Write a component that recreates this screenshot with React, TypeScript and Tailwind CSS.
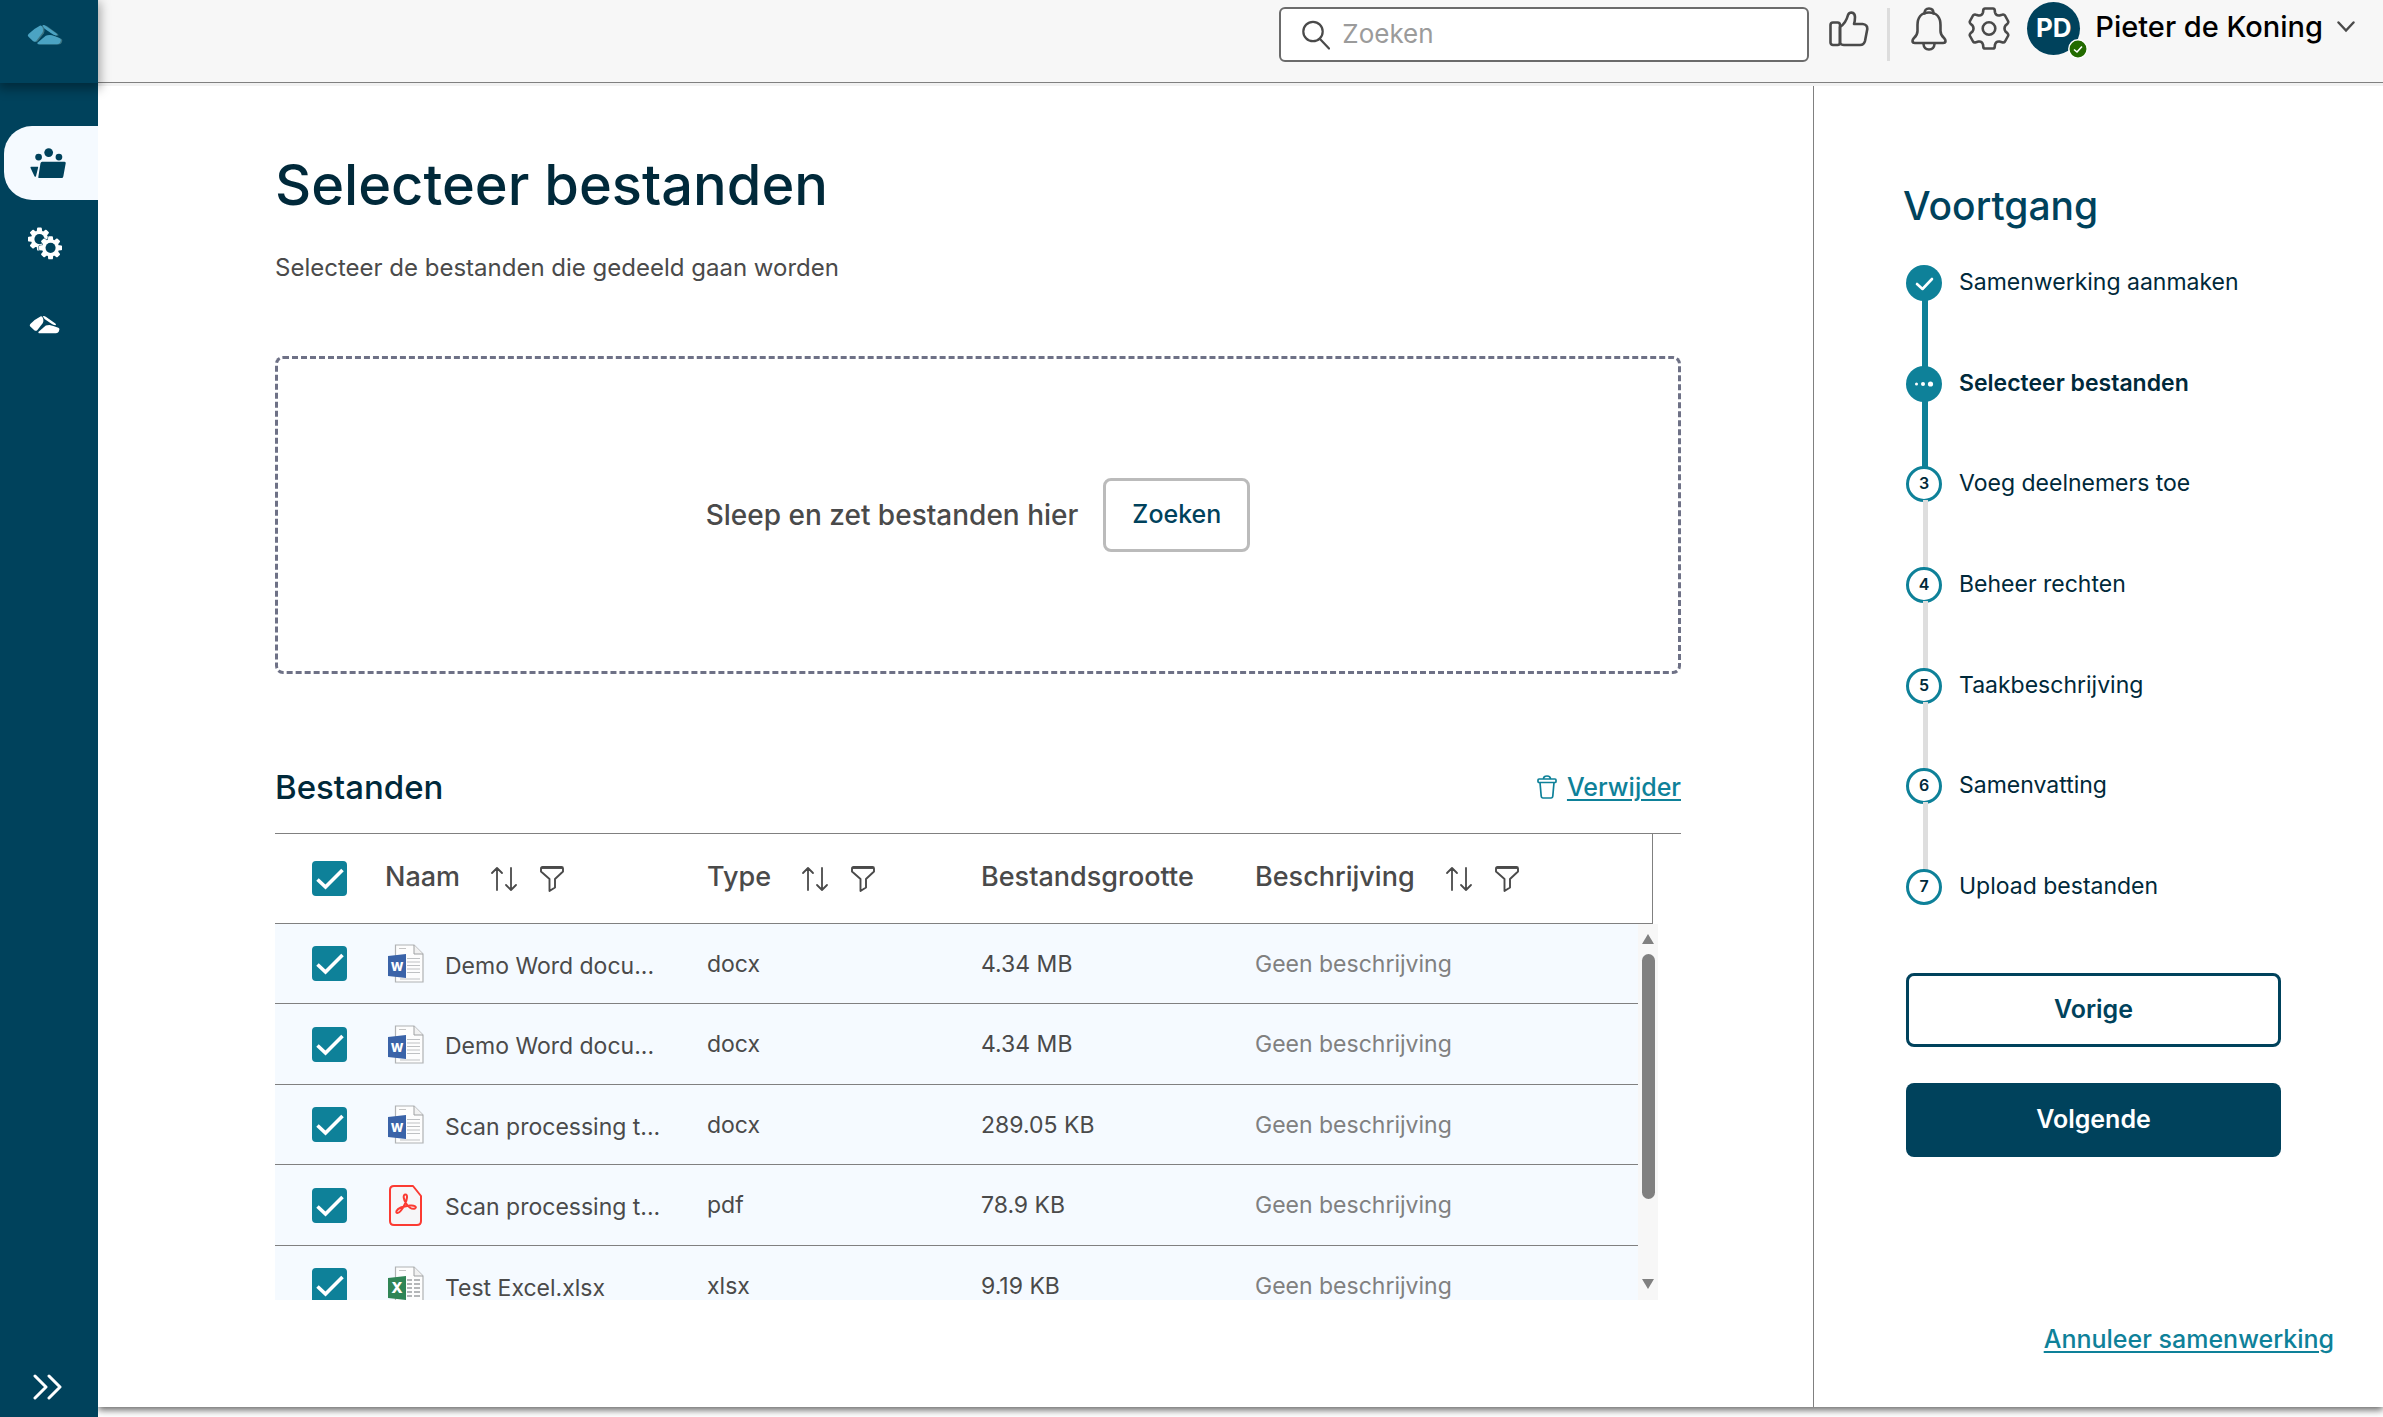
import React from "react";

const TEAL = "#0e8199";

/* ---------- icons ---------- */

function Stones({ className }: { className?: string }) {
  return (
    <g className={className}>
      <path d="M36 4Q40 3 43 11Q45 19 42 24L25 46Q21 50 16 46L4 35Q0 31 4 27Q18 13 36 4Z" />
      <path d="M42 3Q47 2 52 6L80 26Q84 30 80 31Q74 31 67 26L48 13Q44 9 42 3Z" />
      <path d="M51 32Q55 30 62 30Q72 31 89 39Q93 41 92 45L90 51Q88 55 82 55L30 55Q26 54 30 50Z" />
    </g>
  );
}

function LogoIcon() {
  return (
    <svg viewBox="0 0 98 60" className="w-9" aria-hidden="true">
      <g transform="translate(4 1)"><Stones className="fill-[#3b7482]" /></g>
      <Stones className="fill-[#4ba3c3]" />
    </svg>
  );
}

function StonesIcon() {
  return (
    <svg viewBox="0 0 94 58" className="w-[31px]" aria-hidden="true">
      <Stones className="fill-white" />
    </svg>
  );
}

function TeamFolderIcon() {
  return (
    <svg viewBox="0 0 107 92" className="w-9 fill-[#00425c]" aria-hidden="true">
      <circle cx="55.500" cy="13.500" r="13" />
      <circle cx="25.500" cy="27" r="10" />
      <circle cx="86" cy="27" r="10" />
      <path d="M3 56H23Q25 56 24 59L18 83Q16 88 13 83L2 60Q0 56 3 56Z" />
      <path d="M36 41H102Q107 41 106 46L99 85Q97 91 91 91H29Q24 91 25 85L31 46Q32 41 36 41Z" />
    </svg>
  );
}

function gearPath(cx: number, cy: number, outer: number, inner: number) {
  const teeth = 8;
  const points: string[] = [];
  for (let i = 0; i < teeth; i++) {
    const base = (i / teeth) * Math.PI * 2 - Math.PI / 2;
    const spots: [number, number][] = [[-0.25, inner], [-0.14, outer], [0.14, outer], [0.25, inner]];
    spots.forEach(([offset, radius]) =>
      points.push(`${(cx + Math.cos(base + offset) * radius).toFixed(2)} ${(cy + Math.sin(base + offset) * radius).toFixed(2)}`),
    );
  }
  return `M${points.join("L")}Z`;
}

function GearsIcon() {
  const back = gearPath(34, 36, 32, 23);
  const front = gearPath(67, 62, 32, 23);
  return (
    <svg viewBox="0 0 101 100" className="w-[34px]" strokeLinejoin="round" aria-hidden="true">
      <path d={back} className="fill-white stroke-white" strokeWidth="5" />
      <circle cx="34" cy="36" r="15" className="fill-[#00425c]" />
      <path d={front} className="fill-[#00425c] stroke-[#00425c]" strokeWidth="8" />
      <path d={front} className="fill-white stroke-white" strokeWidth="5" />
      <circle cx="67" cy="62" r="15" className="fill-[#00425c]" />
    </svg>
  );
}

function ExpandIcon() {
  return (
    <svg viewBox="0 0 30 28" className="w-[30px] fill-none stroke-white" strokeWidth="3" strokeLinecap="round" strokeLinejoin="round" aria-hidden="true">
      <path d="M3 3L14 14L3 25M17 3L28 14L17 25" />
    </svg>
  );
}

function SearchIcon() {
  return (
    <svg viewBox="0 0 28 30" className="w-7 fill-none stroke-[#4a4a4a]" strokeWidth="2.200" strokeLinecap="round" aria-hidden="true">
      <circle cx="11" cy="11.500" r="9.700" />
      <path d="M18 19L27 28.500" />
    </svg>
  );
}

const outline = "fill-none stroke-[#4a4a4a]";

function ThumbIcon() {
  return (
    <svg viewBox="0 0 40 36" className={`w-10 ${outline}`} strokeWidth="2.600" strokeLinejoin="round" aria-hidden="true">
      <rect x="1.500" y="11.500" width="9.500" height="22.500" rx="2.500" />
      <path d="M11 16Q17 12 19 4Q20 1.500 22.500 1.500Q26 2 26 6Q26 10 25 13H33.500Q38.500 13.500 38.300 18L36 30Q35 34 31 34H15Q12 34 11 32Z" />
    </svg>
  );
}

function BellIcon() {
  return (
    <svg viewBox="0 0 36 44" className={`w-9 ${outline}`} strokeWidth="2.600" strokeLinejoin="round" strokeLinecap="round" aria-hidden="true">
      <path d="M13.500 6.500Q13.500 1.500 18 1.500T22.500 6.500" />
      <path d="M18 5.500C10 5.500 6.500 11 6.500 18V24Q6.500 28 3 31Q1.500 32.500 1.500 34Q1.500 36 4 36H32Q34.500 36 34.500 34Q34.500 32.500 33 31Q29.500 28 29.500 24V18C29.500 11 26 5.500 18 5.500Z" />
      <path d="M12.500 37Q13 42.500 18 42.500T23.500 37" />
    </svg>
  );
}

function SettingsIcon() {
  return (
    <svg viewBox="0 0 42 43" className={`w-[42px] ${outline}`} strokeWidth="2.600" strokeLinejoin="round" aria-hidden="true">
      <path d="M17 1.500H25Q26.500 1.500 26.700 3L27 5.500Q28 9 31.500 8.500L34 7.700Q36 7 37 8.500L40 14Q40.700 15.500 39.500 16.700L37.500 18.500Q35.500 21.500 37.500 24.500L39.500 26.300Q40.700 27.500 40 29L37 34.500Q36 36 34 35.300L31.500 34.500Q28 34 27 37.500L26.700 40Q26.500 41.500 25 41.500H17Q15.500 41.500 15.300 40L15 37.500Q14 34 10.500 34.500L8 35.300Q6 36 5 34.500L2 29Q1.300 27.500 2.500 26.300L4.500 24.500Q6.500 21.500 4.500 18.500L2.500 16.700Q1.300 15.500 2 14L5 8.500Q6 7 8 7.700L10.500 8.500Q14 9 15 5.500L15.300 3Q15.500 1.500 17 1.500Z" />
      <circle cx="21" cy="21.500" r="6.300" />
    </svg>
  );
}

function TrashIcon() {
  return (
    <svg viewBox="0 0 20 24" className="w-5 fill-none stroke-[#0e8199]" strokeWidth="1.700" strokeLinejoin="round" aria-hidden="true">
      <path d="M6.500 4Q6.500 1 10 1T13.500 4" />
      <rect x="1" y="4" width="18" height="3.500" rx="1" />
      <path d="M3 7.500L4.200 21Q4.400 23 6 23H14Q15.600 23 15.800 21L17 7.500" />
    </svg>
  );
}

function SortIcon() {
  return (
    <svg viewBox="0 0 28 26" className={`w-7 ${outline}`} strokeWidth="1.800" strokeLinecap="round" strokeLinejoin="round" aria-hidden="true">
      <path d="M7 24V2M2 7L7 2L12 7M21 2V24M16 19L21 24L26 19" />
    </svg>
  );
}

function FilterIcon() {
  return (
    <svg viewBox="0 0 24 26" className={`w-6 ${outline}`} strokeWidth="1.900" strokeLinejoin="round" aria-hidden="true">
      <path d="M2.500 1H21.500Q23 1 23 2.500V5.500L15 13V21.500L9.500 25V13L1 5.500V2.500Q1 1 2.500 1Z" />
      <path d="M1.500 2H22.500" />
    </svg>
  );
}

function OfficeIcon({ letter }: { letter: "W" | "X" }) {
  const excel = letter === "X";
  return (
    <svg viewBox="0 0 36 39" className="h-[39px] w-9" aria-hidden="true">
      <path d="M7.500 1H26L35 10V38H7.500Z" fill="#fdfdfd" stroke="#b0b2b4" strokeWidth="1.200" />
      <path d="M26 1V10H35" fill="#f1f1f1" stroke="#9fa1a3" />
      <path d="M11 4.500H18" stroke="#c4c4c4" />
      {excel ? (
        <path d="M19 14H24M26 14H32M19 18H24M26 18H32M19 22H24M26 22H32M19 26H24M26 26H32M19 30H24M26 30H32" stroke="#b4b6b8" strokeWidth="1.800" />
      ) : (
        <path d="M19 14.500H32M19 18H32M19 21.500H32M19 25H32M19 28.500H32M12 35H32" stroke="#bfc1c3" />
      )}
      <path d="M0 12L18 10V34L0 32Z" fill={excel ? "#2f8556" : "#3a63a8"} />
      <text x="9" y="27" textAnchor="middle" fill="#fff" fontFamily="Inter, sans-serif" fontWeight="800" fontSize={excel ? 15 : 12}>
        {letter}
      </text>
    </svg>
  );
}

function PdfIcon() {
  return (
    <svg viewBox="0 0 36 41" className="h-[41px] w-9" fill="none" stroke="#fb3b33" strokeLinejoin="round" aria-hidden="true">
      <path d="M6 1H25L33 11V36Q33 40 29 40H6Q2 40 2 36V5Q2 1 6 1Z" fill="#f6f6f8" strokeWidth="2" />
      <path
        d="M17.500 9.500C14.500 9.500 15.500 15 18.500 19C21 22.500 24.500 24.500 27 23.500C29.500 22 26.500 20 22 20.500C17 21 10 23 8.500 26C7.500 28.500 10.500 29 13 25.500C16 21.500 18.500 16 19 12.500C19.200 10.500 18.500 9.500 17.500 9.500Z"
        strokeWidth="2"
      />
    </svg>
  );
}

/* ---------- shared pieces ---------- */

function Checkbox({ label }: { label: string }) {
  return (
    <label className="relative block size-[35px]">
      <input type="checkbox" defaultChecked aria-label={label} className="peer block size-full appearance-none rounded border-2 border-[#0e8199] bg-white checked:bg-[#0e8199]" />
      <svg viewBox="0 0 35 35" className="pointer-events-none absolute inset-0 hidden fill-none stroke-white peer-checked:block" strokeWidth="3.600" aria-hidden="true">
        <path d="M5.500 18.500L13.500 26L30.500 9" />
      </svg>
    </label>
  );
}

const rowGrid = "grid grid-cols-[110px_322fr_274fr_274fr_383fr] items-center";

const files: { name: string; type: string; size: string }[] = [
  { name: "Demo Word docu...", type: "docx", size: "4.34 MB" },
  { name: "Demo Word docu...", type: "docx", size: "4.34 MB" },
  { name: "Scan processing t...", type: "docx", size: "289.05 KB" },
  { name: "Scan processing t...", type: "pdf", size: "78.9 KB" },
  { name: "Test Excel.xlsx", type: "xlsx", size: "9.19 KB" },
];

const steps = [
  "Samenwerking aanmaken",
  "Selecteer bestanden",
  "Voeg deelnemers toe",
  "Beheer rechten",
  "Taakbeschrijving",
  "Samenvatting",
  "Upload bestanden",
];

function FileIcon({ type }: { type: string }) {
  if (type === "pdf") return <PdfIcon />;
  return <OfficeIcon letter={type === "xlsx" ? "X" : "W"} />;
}

function HeaderCell({ title, tools }: { title: string; tools?: boolean }) {
  return (
    <th scope="col" className="flex items-center text-left text-[27px] font-medium">
      <span className="pb-0.5">{title}</span>
      {tools && (
        <span className="ml-[30px] flex items-center gap-[22px]">
          <button type="button" aria-label={`Sorteer op ${title}`}><SortIcon /></button>
          <button type="button" aria-label={`Filter op ${title}`}><FilterIcon /></button>
        </span>
      )}
    </th>
  );
}

function Sidebar() {
  return (
    <nav className="z-20 flex w-[98px] shrink-0 flex-col bg-[#00425c]" aria-label="Hoofdmenu">
      <a href="#start" aria-label="Start" className="flex h-[83px] items-center pb-3 pl-[27px] shadow-[0_4px_10px_2px_rgba(0,0,0,0.35)]">
        <LogoIcon />
      </a>
      <div className="mt-[43px] flex flex-col gap-[7px]">
        <a href="#samenwerkingen" aria-label="Samenwerkingen" className="ml-1 flex h-[74px] items-center rounded-l-[28px] bg-[#f5faff] pl-[26px]">
          <TeamFolderIcon />
        </a>
        <a href="#beheer" aria-label="Beheer" className="flex h-[74px] items-center pl-7"><GearsIcon /></a>
        <a href="#over" aria-label="Over" className="flex h-[74px] items-center pl-[29px]"><StonesIcon /></a>
      </div>
      <button type="button" aria-label="Menu uitklappen" className="mt-auto flex items-center pb-4 pl-8">
        <ExpandIcon />
      </button>
    </nav>
  );
}

function TopBar() {
  return (
    <header className="z-10 flex h-[83px] shrink-0 items-start justify-end border-b border-[#808080] bg-[#f7f7f7] pr-[28px]">
      <div className="mt-[7px] flex h-[55px] w-[530px] items-center gap-3 rounded-md border-2 border-[#6b6b6b] bg-white pl-[21px]">
        <SearchIcon />
        <input type="search" aria-label="Zoeken" placeholder="Zoeken" className="min-w-0 flex-1 bg-transparent pb-0.5 text-[26px] outline-none placeholder:text-[#9b9b9b]" />
      </div>
      <button type="button" aria-label="Feedback" className="mt-[11px] ml-5"><ThumbIcon /></button>
      <div className="mt-2 ml-[18px] h-[53px] w-[3px] bg-[#dddddd]" />
      <button type="button" aria-label="Meldingen" className="mt-[7px] ml-[21px]"><BellIcon /></button>
      <button type="button" aria-label="Instellingen" className="mt-[7px] ml-[21px]"><SettingsIcon /></button>
      <button type="button" className="ml-[17px] flex h-[53px] items-center">
        <span className="relative mt-1 flex size-[53px] items-center justify-center rounded-full bg-[#00425c] pb-0.5 text-[26px] font-bold text-white">
          PD
          <svg viewBox="0 0 20 20" className="absolute -right-2 -bottom-1 size-5" aria-hidden="true">
            <circle cx="10" cy="10" r="9.200" fill="#236b00" stroke="#fff" strokeWidth="1.500" />
            <path d="M6 10.500L9 13L14 7.500" fill="none" stroke="#fff" strokeWidth="1.600" />
          </svg>
        </span>
        <span className="ml-[15px] text-[29px] font-medium text-black">Pieter de Koning</span>
        <svg viewBox="0 0 18 12" className="ml-[14px] w-[18px] fill-none stroke-[#4a4a4a]" strokeWidth="2.400" strokeLinecap="round" aria-hidden="true">
          <path d="M1.500 1.500L9 9.500L16.500 1.500" />
        </svg>
      </button>
    </header>
  );
}

function FilesTable() {
  return (
    <section className="mt-[88px]" aria-labelledby="bestanden">
      <div className="flex items-center justify-between">
        <h2 id="bestanden" className="text-[33px] leading-[50px] font-medium text-[#00293a]">Bestanden</h2>
        <a href="#verwijder" className="flex items-center gap-[10px] text-[25px] font-medium text-[#0e8199]">
          <TrashIcon />
          <span className="pt-0.5 underline decoration-2 underline-offset-3">Verwijder</span>
        </a>
      </div>
      <div className="mt-[21px] border-t border-[#808080] pr-7">
        <table className="block border-r border-b border-[#808080]">
          <thead className="block">
            <tr className={`${rowGrid} h-[89px] pr-[14px]`}>
              <th scope="col" className="pl-[37px]"><Checkbox label="Alles selecteren" /></th>
              <HeaderCell title="Naam" tools />
              <HeaderCell title="Type" tools />
              <HeaderCell title="Bestandsgrootte" />
              <HeaderCell title="Beschrijving" tools />
            </tr>
          </thead>
        </table>
      </div>
      <div className="mr-[23px] flex h-[376px]">
        <div className="flex-1 overflow-hidden">
          <table className="block">
            <tbody className="block">
              {files.map((file, i) => (
                <tr key={i} className={`${rowGrid} border-b border-[#808080] bg-[#f5faff] text-[23px] leading-6 odd:h-20 even:h-[81px]`}>
                  <td className="pl-[37px]"><Checkbox label={`Selecteer ${file.name}`} /></td>
                  <td className="flex items-center gap-[21px] pl-[3px]">
                    <FileIcon type={file.type} />
                    <span className="pt-1">{file.name}</span>
                  </td>
                  <td>{file.type}</td>
                  <td>{file.size}</td>
                  <td className="text-[#808080]">Geen beschrijving</td>
                </tr>
              ))}
            </tbody>
          </table>
        </div>
        <div className="flex w-5 flex-col items-center bg-[#f7f7f7] pt-[10px] pb-[11px]" aria-hidden="true">
          <svg viewBox="0 0 12 10" className="w-3 fill-[#808080]"><path d="M6 0L12 10H0Z" /></svg>
          <div className="mt-[10px] h-[245px] w-[13px] rounded-full bg-[#808080]" />
          <svg viewBox="0 0 12 10" className="mt-auto w-3 fill-[#808080]"><path d="M6 10L12 0H0Z" /></svg>
        </div>
      </div>
    </section>
  );
}

function StepMarker({ index }: { index: number }) {
  if (index === 0) {
    return (
      <svg viewBox="0 0 36 36" className="size-9 shrink-0" fill="none" role="img" aria-label="Voltooid">
        <circle cx="18" cy="18" r="18" fill={TEAL} />
        <path d="M11 19L16.500 24L26 14" stroke="#fff" strokeWidth="2.600" strokeLinecap="round" strokeLinejoin="round" />
      </svg>
    );
  }
  if (index === 1) {
    return (
      <svg viewBox="0 0 36 36" className="size-9 shrink-0" role="img" aria-label="Bezig">
        <circle cx="18" cy="18" r="18" fill={TEAL} />
        <circle cx="10.500" cy="18" r="1.500" fill="#fff" />
        <circle cx="17" cy="18" r="2" fill="#fff" />
        <circle cx="24.500" cy="18" r="2.600" fill="#fff" />
      </svg>
    );
  }
  return (
    <span className="flex size-9 shrink-0 items-center justify-center rounded-full border-3 border-[#0e8199] bg-white pb-0.5 text-base font-semibold">
      {index + 1}
    </span>
  );
}

function Progress() {
  return (
    <aside className="flex w-[570px] shrink-0 flex-col border-l border-[#808080] pr-[49px] pl-[89px]">
      <h2 className="mt-[96px] text-[39px] leading-[48px] font-medium text-[#00425c]">Voortgang</h2>
      <div className="mt-[35px] pr-[53px] pl-[3px]">
        <ol className="flex h-[640px] flex-col text-[#00293a]">
          {steps.map((step, i) => (
            <li key={step} className="flex items-stretch gap-[17px] not-last:flex-1">
              <span className="flex flex-col items-center">
                <StepMarker index={i} />
                {i < steps.length - 1 && (
                  <span className={i < 2 ? "-my-0.5 ml-0.5 w-1.5 flex-1 bg-[#0e8199]" : "z-10 -mt-0.5 ml-0.5 w-[5px] flex-1 bg-[#dedede]"} />
                )}
              </span>
              <span className={i === 1 ? "text-[23px] leading-[35px] font-semibold" : "text-[23px] leading-[35px]"}>{step}</span>
            </li>
          ))}
        </ol>
        <button type="button" className="mt-[68px] h-[74px] w-full rounded-lg border-3 border-[#00425c] bg-white text-[25px] font-semibold text-[#00425c]">Vorige</button>
        <button type="button" className="mt-9 h-[74px] w-full rounded-lg bg-[#00425c] text-[25px] font-semibold text-white">Volgende</button>
      </div>
      <a href="#annuleer" className="mt-auto mb-[49px] self-end text-[25px] font-medium text-[#0e8199] underline decoration-2 underline-offset-3">
        Annuleer samenwerking
      </a>
    </aside>
  );
}

export default function App() {
  return (
    <div className="flex min-h-screen bg-white font-['Inter',sans-serif] text-[#4a4a4a]">
      <Sidebar />
      <div className="flex min-w-0 flex-1 flex-col pb-[10px]">
        <TopBar />
        <div className="flex flex-1 border-t-3 border-[#f2f2f2] bg-white shadow-[0_3px_7px_rgba(0,0,0,0.6)]">
          <main className="min-w-0 flex-1 pr-[132px] pl-[177px]">
            <h1 className="mt-[65px] text-[56px] leading-[68px] font-medium text-[#00293a]">Selecteer bestanden</h1>
            <p className="mt-[33px] text-2xl leading-8">Selecteer de bestanden die gedeeld gaan worden</p>
            <div className="mt-[72px] flex h-[318px] items-center justify-center gap-[25px] rounded-lg border-3 border-dashed border-[#6e7186]">
              <span className="text-[28px] font-medium">Sleep en zet bestanden hier</span>
              <button type="button" className="h-[74px] rounded-lg border-3 border-[#bbbbbb] px-[26px] text-[25px] font-medium text-[#00425c]">Zoeken</button>
            </div>
            <FilesTable />
          </main>
          <Progress />
        </div>
      </div>
    </div>
  );
}
